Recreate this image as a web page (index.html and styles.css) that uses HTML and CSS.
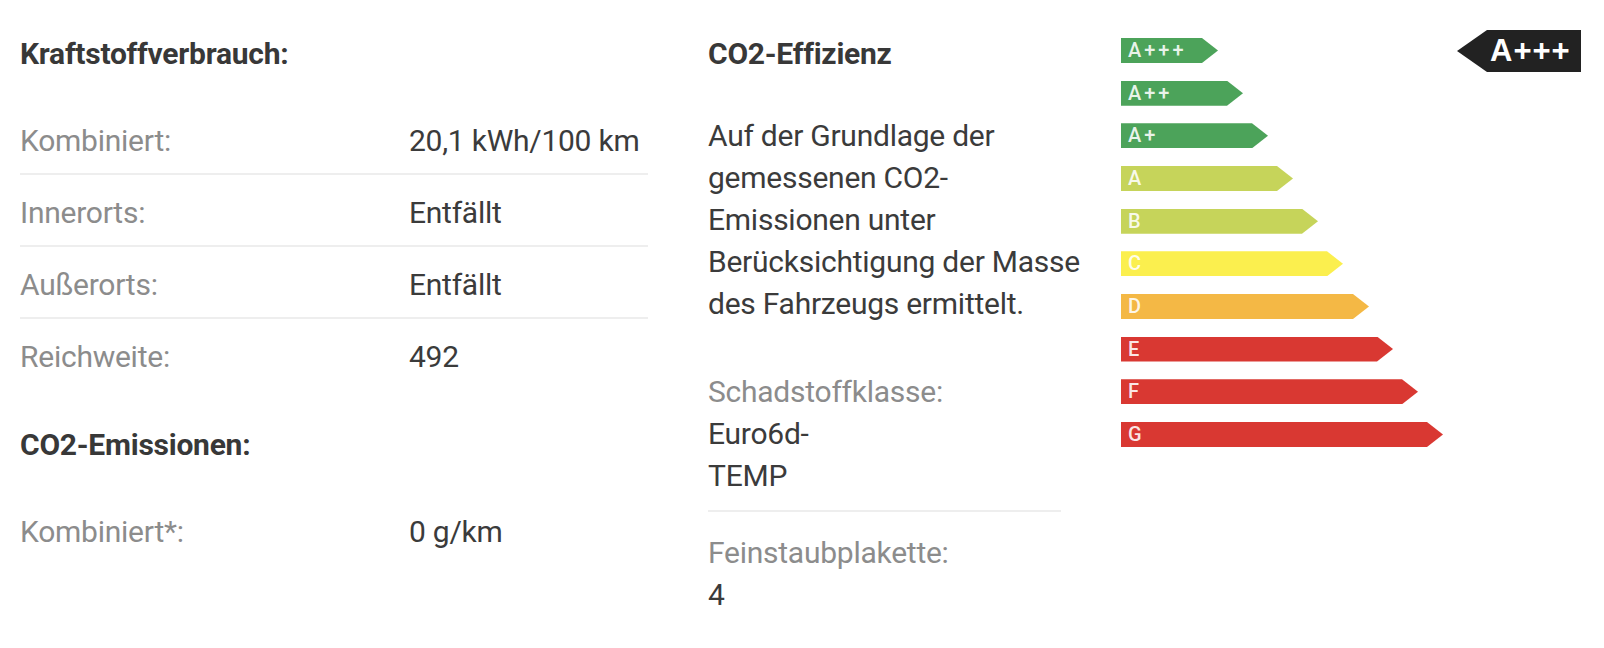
FILE: index.html
```html
<!DOCTYPE html>
<html lang="de">
<head>
<meta charset="utf-8">
<title>Verbrauch und Effizienz</title>
<link rel="stylesheet" href="styles.css">
</head>
<body>
<main class="page">
  <section class="col col-consumption">
    <h2 class="heading">Kraftstoffverbrauch:</h2>
    <dl class="spec-list">
      <div class="spec-row divided"><dt class="label">Kombiniert:</dt><dd class="value">20,1 kWh/100 km</dd></div>
      <div class="spec-row divided"><dt class="label">Innerorts:</dt><dd class="value">Entfällt</dd></div>
      <div class="spec-row divided"><dt class="label">Außerorts:</dt><dd class="value">Entfällt</dd></div>
      <div class="spec-row"><dt class="label">Reichweite:</dt><dd class="value">492</dd></div>
    </dl>
    <h2 class="heading heading-next">CO2-Emissionen:</h2>
    <dl class="spec-list">
      <div class="spec-row"><dt class="label">Kombiniert*:</dt><dd class="value">0 g/km</dd></div>
    </dl>
  </section>

  <section class="col col-efficiency">
    <h2 class="heading">CO2-Effizienz</h2>
    <p class="intro">Auf der Grundlage der<br>gemessenen CO2-<br>Emissionen unter<br>Berücksichtigung der Masse<br>des Fahrzeugs ermittelt.</p>
    <div class="stack-item divided">
      <div class="label">Schadstoffklasse:</div>
      <div class="value value-narrow">Euro6d-TEMP</div>
    </div>
    <div class="stack-item stack-last">
      <div class="label">Feinstaubplakette:</div>
      <div class="value">4</div>
    </div>
  </section>

  <section class="energy">
    <ul class="bars">
      <li class="bar g-dark" style="width:97px">A+++</li>
      <li class="bar g-dark" style="width:122px">A++</li>
      <li class="bar g-dark" style="width:147px">A+</li>
      <li class="bar g-light" style="width:172px">A</li>
      <li class="bar g-light" style="width:197px">B</li>
      <li class="bar g-yellow" style="width:222px">C</li>
      <li class="bar g-orange" style="width:248px">D</li>
      <li class="bar g-red" style="width:272px">E</li>
      <li class="bar g-red" style="width:297px">F</li>
      <li class="bar g-red" style="width:322px">G</li>
    </ul>
    <div class="marker">A+++</div>
  </section>
</main>
</body>
</html>
```

FILE: styles.css
```css
* {
  box-sizing: border-box;
}

html, body {
  margin: 0;
  padding: 0;
  background: #ffffff;
}

body {
  font-family: "Roboto", "Liberation Sans", sans-serif;
  font-size: 30px;
  line-height: 42px;
  letter-spacing: -0.25px;
  color: #3b3b3b;
  width: 1604px;
  height: 648px;
  overflow: hidden;
}

.page {
  display: flex;
  align-items: flex-start;
  padding: 0 0 0 20px;
}

.col {
  padding-top: 33px;
}

.col-consumption {
  width: 628px;
  margin-right: 60px;
}

.col-efficiency {
  width: 353px;
  margin-right: 60px;
}

.heading {
  margin: 0;
  font-size: 30px;
  line-height: 42px;
  font-weight: 700;
  color: #383838;
}

.heading-next {
  margin-top: 35px;
}

.spec-list {
  margin: 28px 0 0;
  padding: 0;
}

.spec-row {
  display: flex;
  padding: 17px 0 11px;
}

.spec-row.divided {
  border-bottom: 2px solid #eeeeee;
}

.spec-row .label {
  width: 389px;
  flex: none;
}

.label {
  margin: 0;
  color: #8c8c8c;
}

.value {
  margin: 0;
  color: #3b3b3b;
}

.intro {
  margin: 40px 0 0;
  white-space: nowrap;
  color: #3b3b3b;
}

.stack-item {
  margin-top: 46px;
  padding-bottom: 13px;
}

.stack-item.divided {
  border-bottom: 2px solid #eeeeee;
}

.stack-last {
  margin-top: 0;
  padding-top: 20px;
}

.value-narrow {
  width: 50%;
}

.energy {
  flex: 1;
  display: flex;
  align-items: flex-start;
  padding-top: 30px;
}

.bars {
  list-style: none;
  margin: 8px 0 0;
  padding: 0;
  display: flex;
  flex-direction: column;
  gap: 17.67px;
}

.bar {
  height: 25px;
  padding-left: 7px;
  font-family: "Roboto", "Liberation Sans", sans-serif;
  font-size: 20px;
  font-weight: 500;
  line-height: 25px;
  letter-spacing: 3px;
  color: rgba(255, 255, 255, 0.88);
  clip-path: polygon(0 0, calc(100% - 16px) 0, 100% 50%, calc(100% - 16px) 100%, 0 100%);
}

.g-dark { background: #4ca35a; }
.g-light { background: #c6d45a; }
.g-yellow { background: #fbef4e; }
.g-orange { background: #f4b845; }
.g-red { background: #d93832; }

.marker {
  margin-left: auto;
  margin-right: 23px;
  width: 124px;
  height: 42px;
  padding-left: 33px;
  background: #222222;
  color: #ffffff;
  font-family: "Liberation Sans", sans-serif;
  font-weight: 700;
  font-size: 31px;
  line-height: 42px;
  letter-spacing: 1px;
  clip-path: polygon(0 50%, 30px 0, 100% 0, 100% 100%, 30px 100%);
}
```
